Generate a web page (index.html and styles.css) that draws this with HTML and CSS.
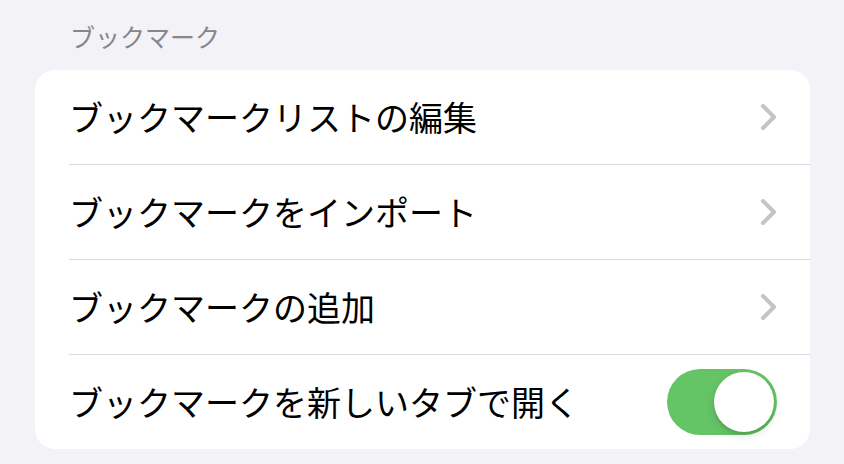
FILE: index.html
```html
<!DOCTYPE html>
<html lang="ja">
<head>
<meta charset="utf-8">
<title>ブックマーク</title>
<link rel="stylesheet" href="styles.css">
</head>
<body>
<div class="header">ブックマーク</div>
<div class="card">
  <div class="row">
    <span class="label">ブックマークリストの編集</span>
    <svg class="chev" width="17" height="28" viewBox="0 0 17 28"><polyline points="3,3 14,14 3,25" fill="none" stroke="#c4c4c7" stroke-width="4" stroke-linecap="round" stroke-linejoin="round"/></svg>
  </div>
  <div class="row">
    <span class="label">ブックマークをインポート</span>
    <svg class="chev" width="17" height="28" viewBox="0 0 17 28"><polyline points="3,3 14,14 3,25" fill="none" stroke="#c4c4c7" stroke-width="4" stroke-linecap="round" stroke-linejoin="round"/></svg>
  </div>
  <div class="row">
    <span class="label">ブックマークの追加</span>
    <svg class="chev" width="17" height="28" viewBox="0 0 17 28"><polyline points="3,3 14,14 3,25" fill="none" stroke="#c4c4c7" stroke-width="4" stroke-linecap="round" stroke-linejoin="round"/></svg>
  </div>
  <div class="row last">
    <span class="label">ブックマークを新しいタブで開く</span>
    <div class="toggle"><div class="knob"></div></div>
  </div>
</div>
</body>
</html>
```
FILE: styles.css
```css
body {
  margin: 0;
  background: #f2f2f7;
  font-family: "Noto Sans CJK JP", "Noto Sans", sans-serif;
  width: 844px;
  height: 464px;
  overflow: hidden;
}

.header {
  box-sizing: border-box;
  height: 70px;
  padding: 24px 0 0 70px;
  font-size: 25px;
  line-height: 25px;
  color: #86868b;
}

.card {
  margin: 0 34px 0 35px;
  background: #ffffff;
  border-radius: 20px;
  overflow: hidden;
}

.row {
  display: flex;
  align-items: center;
  justify-content: space-between;
  height: 94px;
  margin-left: 34px;
  padding-right: 33px;
  border-bottom: 1px solid #dcdce0;
}

.row.last {
  border-bottom: none;
  padding-right: 33px;
}

.label {
  font-size: 34px;
  line-height: 40px;
  color: #000000;
}

.toggle {
  box-sizing: border-box;
  display: flex;
  justify-content: flex-end;
  align-items: center;
  width: 110px;
  height: 66px;
  padding: 3px;
  border-radius: 33px;
  background: #65c466;
}

.knob {
  width: 60px;
  height: 60px;
  border-radius: 50%;
  background: #ffffff;
  box-shadow: 0 3px 8px rgba(0, 0, 0, 0.15), 0 3px 1px rgba(0, 0, 0, 0.06);
}
```
